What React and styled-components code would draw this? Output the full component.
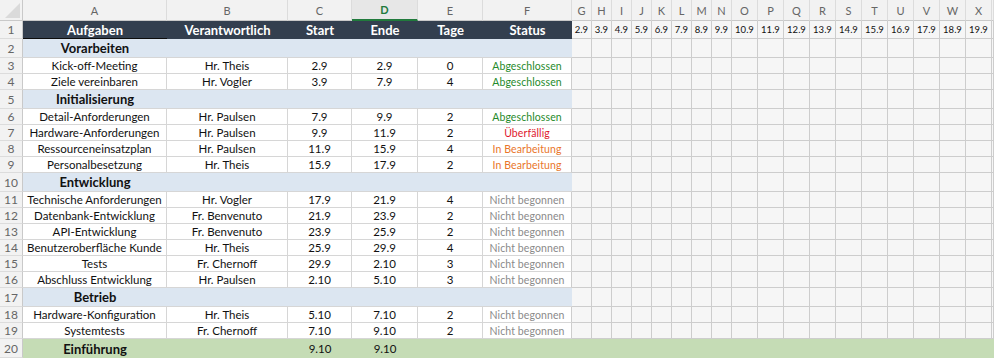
import React from "react";
import styled, { createGlobalStyle, css } from "styled-components";

const COLS =
  "23px 144px 121px 64px 66px 65px 89px repeat(8, 20px) repeat(10, 26px) 1fr";

const GlobalStyle = createGlobalStyle`
  html, body { margin: 0; padding: 0; background: #f6f6f6; }
  body { font-family: "Lato", "Open Sans", "Liberation Sans", sans-serif; }
  * { box-sizing: border-box; }
`;

const Sheet = styled.div`
  width: 994px;
  height: 358px;
  overflow: hidden;
  display: flex;
  flex-direction: column;
  background: #f6f6f6;
`;

const Row = styled.div`
  display: grid;
  grid-template-columns: ${COLS};
  height: ${(p) => p.$h}px;
  flex: none;
`;

const centered = css`
  display: flex;
  align-items: center;
  justify-content: center;
  white-space: nowrap;
  overflow: hidden;
`;

const Corner = styled.div`
  display: flex;
  align-items: flex-end;
  justify-content: flex-end;
  padding: 0 2px 2px 0;
  background: #f2f2f2;
  border-right: 1px solid #c9c9c9;
  border-bottom: 1px solid #c9c9c9;
`;

const Tri = styled.div`
  width: 15px;
  height: 15px;
  background: #dadada;
  clip-path: polygon(100% 0, 100% 100%, 0 100%);
`;

const ColHead = styled.div`
  ${centered};
  background: ${(p) => (p.$active ? "#e7e7e7" : "#f2f2f2")};
  color: ${(p) => (p.$active ? "#217a3c" : "#666666")};
  font-weight: ${(p) => (p.$active ? 700 : 400)};
  font-size: 11px;
  border-right: 1px solid #dcdcdc;
  border-bottom: ${(p) => (p.$active ? "2px solid #217a3c" : "1px solid #c9c9c9")};
`;

const RowNum = styled.div`
  ${centered};
  background: #f2f2f2;
  color: #666666;
  font-size: 12px;
  border-right: 1px solid #c9c9c9;
  border-bottom: 1px solid #dcdcdc;
`;

const HeadCell = styled.div`
  ${centered};
  background: #333f4f;
  color: #ffffff;
  font-weight: 700;
  font-size: 13px;
  border-bottom: 1px solid ${(p) => (p.$sel ? "#0d0d0d" : "#333f4f")};
`;

const DateCell = styled.div`
  ${centered};
  background: #f6f6f6;
  color: #111;
  font-size: 9.5px;
  border-right: 1px solid #cdcdcd;
  border-bottom: 1px solid #cdcdcd;
`;

const GridCell = styled.div`
  background: #f6f6f6;
  border-right: 1px solid #cdcdcd;
  border-bottom: 1px solid #cdcdcd;
`;

const Cell = styled.div`
  ${centered};
  background: #ffffff;
  color: #111;
  font-size: 11.5px;
  border-right: 1px solid #d6d6d6;
  border-bottom: 1px solid #d6d6d6;
`;

const TONES = {
  done: "#1f8a2b",
  late: "#e0192e",
  work: "#e9762a",
  todo: "#8a8a8a",
};

const StatusCell = styled(Cell)`
  color: ${(p) => TONES[p.$tone]};
  font-size: 10.5px;
  letter-spacing: 0.1px;
  border-right-color: #cdcdcd;
`;

const GroupLabel = styled.div`
  ${centered};
  background: #dce6f1;
  color: #111;
  font-weight: 700;
  font-size: 13px;
  border-bottom: 1px solid #d6d6d6;
`;

const GroupFill = styled.div`
  grid-column: span 5;
  background: #dce6f1;
  border-bottom: 1px solid #d6d6d6;
`;

const FinalCell = styled.div`
  ${centered};
  background: #c5dcb5;
  color: #111;
  font-size: ${(p) => (p.$bold ? 13 : 11.5)}px;
  font-weight: ${(p) => (p.$bold ? 700 : 400)};
`;

const FinalFill = styled.div`
  grid-column: 6 / -1;
  background: #c5dcb5;
`;

const LETTERS = "ABCDEFGHIJKLMNOPQRSTUVWX".split("");
const DATES = [
  "2.9", "3.9", "4.9", "5.9", "6.9", "7.9", "8.9", "9.9", "10.9",
  "11.9", "12.9", "13.9", "14.9", "15.9", "16.9", "17.9", "18.9", "19.9",
];
const HEADS = ["Aufgaben", "Verantwortlich", "Start", "Ende", "Tage", "Status"];
const STATUS = {
  done: "Abgeschlossen",
  late: "Überfällig",
  work: "In Bearbeitung",
  todo: "Nicht begonnen",
};

const ROWS = [
  { group: "Vorarbeiten" },
  { t: "Kick-off-Meeting", p: "Hr. Theis", s: "2.9", e: "2.9", d: "0", st: "done" },
  { t: "Ziele vereinbaren", p: "Hr. Vogler", s: "3.9", e: "7.9", d: "4", st: "done" },
  { group: "Initialisierung" },
  { t: "Detail-Anforderungen", p: "Hr. Paulsen", s: "7.9", e: "9.9", d: "2", st: "done" },
  { t: "Hardware-Anforderungen", p: "Hr. Paulsen", s: "9.9", e: "11.9", d: "2", st: "late" },
  { t: "Ressourceneinsatzplan", p: "Hr. Paulsen", s: "11.9", e: "15.9", d: "4", st: "work" },
  { t: "Personalbesetzung", p: "Hr. Theis", s: "15.9", e: "17.9", d: "2", st: "work" },
  { group: "Entwicklung" },
  { t: "Technische Anforderungen", p: "Hr. Vogler", s: "17.9", e: "21.9", d: "4", st: "todo" },
  { t: "Datenbank-Entwicklung", p: "Fr. Benvenuto", s: "21.9", e: "23.9", d: "2", st: "todo" },
  { t: "API-Entwicklung", p: "Fr. Benvenuto", s: "23.9", e: "25.9", d: "2", st: "todo" },
  { t: "Benutzeroberfläche Kunde", p: "Hr. Theis", s: "25.9", e: "29.9", d: "4", st: "todo" },
  { t: "Tests", p: "Fr. Chernoff", s: "29.9", e: "2.10", d: "3", st: "todo" },
  { t: "Abschluss Entwicklung", p: "Hr. Paulsen", s: "2.10", e: "5.10", d: "3", st: "todo" },
  { group: "Betrieb" },
  { t: "Hardware-Konfiguration", p: "Hr. Theis", s: "5.10", e: "7.10", d: "2", st: "todo" },
  { t: "Systemtests", p: "Fr. Chernoff", s: "7.10", e: "9.10", d: "2", st: "todo" },
];

const EmptyGrid = () =>
  Array.from({ length: 19 }, (_, i) => <GridCell key={"g" + i} />);

export default function App() {
  return (
    <>
      <GlobalStyle />
      <Sheet>
        <Row $h={21}>
          <Corner>
            <Tri />
          </Corner>
          {LETTERS.map((l) => (
            <ColHead key={l} $active={l === "D"}>
              {l}
            </ColHead>
          ))}
          <ColHead />
        </Row>

        <Row $h={18}>
          <RowNum>1</RowNum>
          {HEADS.map((h, i) => (
            <HeadCell key={h} $sel={i === 0}>
              {h}
            </HeadCell>
          ))}
          {DATES.map((d) => (
            <DateCell key={d}>{d}</DateCell>
          ))}
          <GridCell />
        </Row>

        {ROWS.map((r, i) => {
          const n = i + 2;
          if (r.group) {
            return (
              <Row key={n} $h={19}>
                <RowNum>{n}</RowNum>
                <GroupLabel>{r.group}</GroupLabel>
                <GroupFill />
                <EmptyGrid />
              </Row>
            );
          }
          return (
            <Row key={n} $h={16}>
              <RowNum>{n}</RowNum>
              <Cell>{r.t}</Cell>
              <Cell>{r.p}</Cell>
              <Cell>{r.s}</Cell>
              <Cell>{r.e}</Cell>
              <Cell>{r.d}</Cell>
              <StatusCell $tone={r.st}>{STATUS[r.st]}</StatusCell>
              <EmptyGrid />
            </Row>
          );
        })}

        <Row $h={19}>
          <RowNum>20</RowNum>
          <FinalCell $bold>Einführung</FinalCell>
          <FinalCell />
          <FinalCell>9.10</FinalCell>
          <FinalCell>9.10</FinalCell>
          <FinalFill />
        </Row>
      </Sheet>
    </>
  );
}
